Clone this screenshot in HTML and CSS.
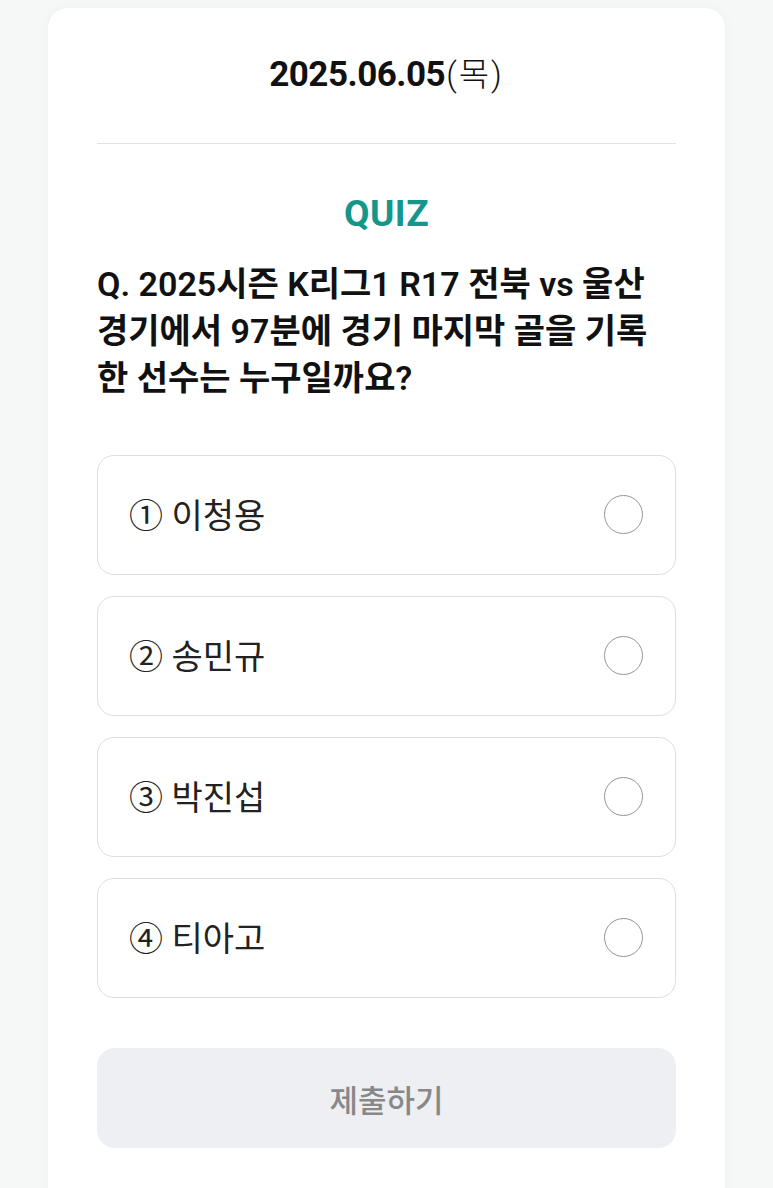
FILE: index.html
```html
<!DOCTYPE html>
<html lang="ko">
<head>
<meta charset="utf-8">
<link rel="stylesheet" href="styles.css">
</head>
<body>
<main class="card">
  <header class="date-head">
    <span class="date-num">2025.06.05</span><span class="date-day">(목)</span>
  </header>
  <hr class="divider">
  <h2 class="quiz-title">QUIZ</h2>
  <p class="question">Q. 2025시즌 K리그1 R17 전북 vs 울산 경기에서 97분에 경기 마지막 골을 기록한 선수는 누구일까요?</p>
  <ul class="options">
    <li class="option"><span class="opt-label">① 이청용</span><span class="radio"></span></li>
    <li class="option"><span class="opt-label">② 송민규</span><span class="radio"></span></li>
    <li class="option"><span class="opt-label">③ 박진섭</span><span class="radio"></span></li>
    <li class="option"><span class="opt-label">④ 티아고</span><span class="radio"></span></li>
  </ul>
  <button class="submit" type="button">제출하기</button>
</main>
</body>
</html>
```
FILE: styles.css
```css
* { box-sizing: border-box; }
html, body { margin: 0; padding: 0; }
body {
  background: #f6f7f7;
  font-family: Roboto, "Noto Sans CJK KR", "Noto Sans", sans-serif;
  color: #111;
  height: 1188px;
  overflow: hidden;
}
.card {
  margin: 8px 48px 0;
  width: 677px;
  min-height: 1240px;
  background: #fff;
  border-radius: 20px;
  box-shadow: 0 0 14px rgba(0, 0, 0, 0.04);
  padding: 0 49px;
  display: flex;
  flex-direction: column;
}
.date-head {
  padding-top: 47px;
  height: 135px;
  text-align: center;
  line-height: 40px;
}
.date-num {
  font-size: 35px;
  font-weight: 700;
  letter-spacing: -0.5px;
}
.date-day {
  font-size: 33px;
  font-weight: 300;
  margin-left: 1px;
  letter-spacing: 2px;
}
.divider {
  margin: 0;
  border: 0;
  height: 1px;
  background: #e2e2e2;
}
.quiz-title {
  margin: 50px 0 0;
  text-align: center;
  font-size: 37px;
  line-height: 40px;
  font-weight: 700;
  color: #14968b;
  letter-spacing: 0.5px;
}
.question {
  margin: 27px 0 0;
  font-size: 34px;
  line-height: 47px;
  font-weight: 600;
  color: #111;
}
.options {
  list-style: none;
  margin: 53px 0 0;
  padding: 0;
  display: flex;
  flex-direction: column;
  gap: 21px;
}
.option {
  height: 120px;
  border: 1px solid #dedede;
  border-radius: 17px;
  display: flex;
  align-items: center;
  justify-content: space-between;
  padding: 0 32px 0 31px;
}
.opt-label {
  font-size: 34px;
  color: #222;
  font-weight: 400;
  margin-top: -4px;
}
.radio {
  width: 39px;
  height: 39px;
  border: 1.7px solid #969696;
  border-radius: 50%;
  margin-top: -2px;
}
.submit {
  margin-top: 50px;
  height: 100px;
  border: 0;
  border-radius: 18px;
  background: #eeeff3;
  color: #888;
  font-family: inherit;
  font-size: 31px;
  font-weight: 500;
}
```
